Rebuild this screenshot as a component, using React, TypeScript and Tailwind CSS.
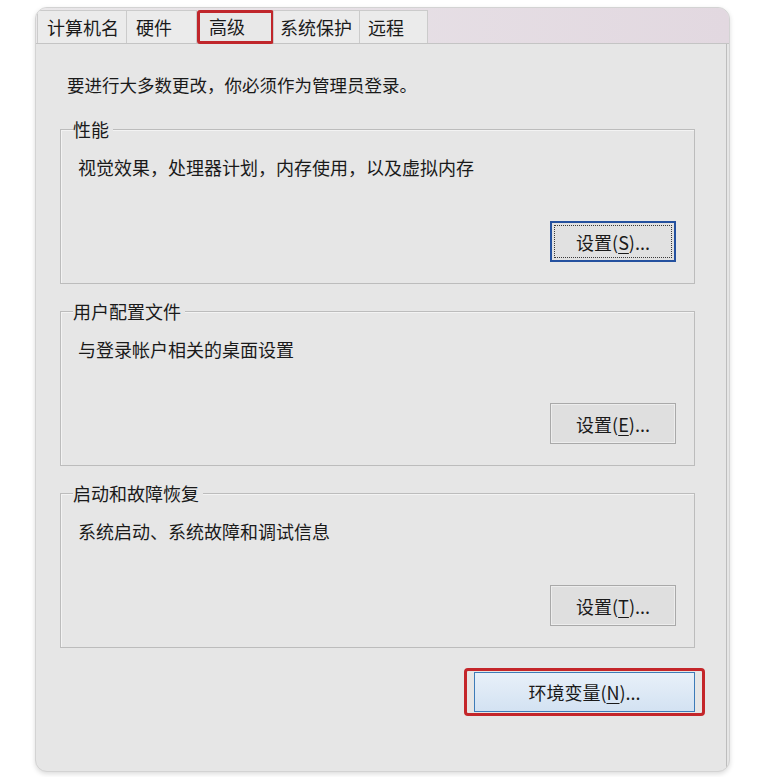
import type { ReactNode } from 'react'

type Tab = { label: string; width: string; pad: string; active?: boolean }

const tabs: Tab[] = [
  { label: '计算机名', width: 'w-[90px]', pad: 'pl-[9px]' },
  { label: '硬件', width: 'w-[71px]', pad: 'pl-[9px]' },
  { label: '高级', width: 'w-[77px]', pad: 'pl-[9px]', active: true },
  { label: '系统保护', width: 'w-[87px]', pad: 'pl-[6px]' },
  { label: '远程', width: 'w-[69px]', pad: 'pl-[8px]' },
]

function AccessKey({ k }: { k: string }) {
  return (
    <>
      (<span className="underline underline-offset-[3px]">{k}</span>)...
    </>
  )
}

function SettingsButton({ k, focused }: { k: string; focused?: boolean }) {
  if (focused) {
    return (
      <button className="h-[41px] w-[126px] border-2 border-[#24519f] bg-[#e1e1e1] p-[2px]">
        <span className="flex h-full w-full items-center justify-center border border-dotted border-[#3a3a3a] leading-none">
          设置<AccessKey k={k} />
        </span>
      </button>
    )
  }
  return (
    <button className="flex h-[41px] w-[126px] items-center justify-center border border-[#a9a9a9] bg-[#dfdfdf] leading-none shadow-[inset_0_0_0_1px_#ededed]">
      设置<AccessKey k={k} />
    </button>
  )
}

function GroupBox({
  title,
  children,
}: {
  title: string
  children: ReactNode
}) {
  return (
    <div className="relative flex h-[155px] w-[635px] flex-col border border-[#bcbcbc] shadow-[inset_1px_1px_0_#f3f3f3]">
      <span className="absolute left-[12px] top-[-13px] bg-[#e6e6e6] pr-[4px] leading-[24px]">
        {title}
      </span>
      {children}
    </div>
  )
}

export default function App() {
  return (
    <div className="min-h-screen bg-white pl-[35px] pt-[7px] font-['Noto_Sans_CJK_SC','Microsoft_YaHei',sans-serif] text-[18px] text-[#1a1a1a]">
      <div className="flex h-[765px] w-[695px] flex-col overflow-hidden rounded-[12px] border border-[#d3d3d3] bg-[#e6e6e6] shadow-[0_2px_5px_rgba(0,0,0,0.14)]">
        {/* tab strip */}
        <div className="flex h-[36px] shrink-0 items-end border-b border-[#c4c4c4] bg-gradient-to-r from-[#e9e7e9] via-[#e6dfe5] to-[#e2d8e0] pl-[1px]">
          {tabs.map((t) =>
            t.active ? (
              <div
                key={t.label}
                className={`flex h-[34px] ${t.width} -mb-px items-start rounded-[3px] border-[3px] border-[#c0262b] bg-[#e8e8e8] ${t.pad} pt-[1px] leading-[24px]`}
              >
                {t.label}
              </div>
            ) : (
              <div
                key={t.label}
                className={`flex h-[33px] ${t.width} items-center border-l border-r border-t border-[#cbcbcb] bg-[#ebebeb] ${t.pad} -ml-px first:ml-0`}
              >
                {t.label}
              </div>
            ),
          )}
        </div>

        {/* panel */}
        <div className="mr-[2px] flex flex-1 flex-col border-r border-[#bdbdbd] pt-[29px]">
          <p className="pl-[31px] text-[17.5px] leading-[24px]">
            要进行大多数更改，你必须作为管理员登录。
          </p>

          <div className="ml-[24px] mt-[32px] flex flex-col gap-[27px]">
            <GroupBox title="性能">
              <p className="pl-[17px] pt-[25px] leading-[24px]">
                视觉效果，处理器计划，内存使用，以及虚拟内存
              </p>
              <div className="mb-[21px] mr-[18px] mt-auto self-end">
                <SettingsButton k="S" focused />
              </div>
            </GroupBox>

            <GroupBox title="用户配置文件">
              <p className="pl-[17px] pt-[25px] leading-[24px]">
                与登录帐户相关的桌面设置
              </p>
              <div className="mb-[21px] mr-[18px] mt-auto self-end">
                <SettingsButton k="E" />
              </div>
            </GroupBox>

            <GroupBox title="启动和故障恢复">
              <p className="pl-[17px] pt-[25px] leading-[24px]">
                系统启动、系统故障和调试信息
              </p>
              <div className="mb-[21px] mr-[18px] mt-auto self-end">
                <SettingsButton k="T" />
              </div>
            </GroupBox>
          </div>

          <div className="mt-[20px] flex justify-end pr-[21px]">
            <div className="rounded-[4px] border-[3px] border-[#c4262a] px-[7px] py-[1px]">
              <button className="flex h-[40px] w-[221px] items-center justify-center border border-[#3d7bb8] bg-gradient-to-b from-[#e8f0f9] to-[#d3e2f2] leading-none">
                环境变量<AccessKey k="N" />
              </button>
            </div>
          </div>
        </div>
      </div>
    </div>
  )
}
